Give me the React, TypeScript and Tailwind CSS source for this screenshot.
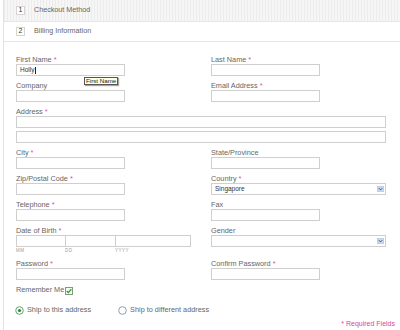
import React from "react";

const font = { fontFamily: '"Liberation Sans", Arial, sans-serif' };

const Req = () => <span className="text-[#d6589c]"> *</span>;

const Label = ({ children, req }: { children: React.ReactNode; req?: boolean }) => (
  <div className="h-[8px] text-[7.3px] leading-[8px] text-[#666] whitespace-nowrap">
    {children}
    {req && <Req />}
  </div>
);

const Box = ({ className = "w-[109px]", children }: { className?: string; children?: React.ReactNode }) => (
  <div className={`h-[12px] border border-[#cfcfcf] bg-white ${className} flex items-center px-[3px] text-[6.5px] text-[#333]`}>
    {children}
  </div>
);

const Arrow = () => (
  <svg width="7" height="6" viewBox="0 0 7 6" className="shrink-0">
    <rect x="0" y="0" width="7" height="6" rx="1" fill="#c9d8ef" stroke="#9fb5d9" strokeWidth="0.5" />
    <path d="M1.8 2.2 L3.5 3.9 L5.2 2.2" fill="none" stroke="#2d4f8a" strokeWidth="1" />
  </svg>
);

const Select = ({ value }: { value?: string }) => (
  <div className="h-[12px] w-[175px] border border-[#cfcfcf] bg-white flex items-center justify-between pl-[3px] pr-[1px] text-[6.5px] text-[#333]">
    <span>{value}</span>
    <Arrow />
  </div>
);

const Field = ({ label, req, children }: { label: string; req?: boolean; children: React.ReactNode }) => (
  <div className="flex flex-col">
    <Label req={req}>{label}</Label>
    {children}
  </div>
);

const Row = ({ children }: { children: React.ReactNode }) => (
  <div className="grid grid-cols-[195px_175px]">{children}</div>
);

const DatePart = ({ w, label, first }: { w: string; label: string; first?: boolean }) => (
  <div className={`flex flex-col ${first ? "" : "-ml-[1px]"}`}>
    <Box className={w} />
    <span className="text-[4.5px] tracking-[0.5px] text-[#999] leading-[7px]">{label}</span>
  </div>
);

export default function App() {
  return (
    <div className="w-[400px] h-[330px] bg-white overflow-hidden" style={font}>
      <div className="ml-[3px] border-l border-[#e2e2e2] h-full">
        <div className="h-[22px] border-b border-[#e6e6e6] bg-[#f6f6f6] bg-[repeating-linear-gradient(90deg,#ececec_0_1px,transparent_1px_3px)] flex items-center pl-[12px] gap-[9px]">
          <div className="w-[9px] h-[9px] bg-white border border-[#d4d4d4] flex items-center justify-center text-[7px] text-[#333]">1</div>
          <span className="text-[7.2px] text-[#666]">Checkout Method</span>
        </div>
        <div className="h-[20px] border-b border-[#e6e6e6] flex items-center pl-[12px] gap-[9px]">
          <div className="w-[9px] h-[9px] bg-white border border-[#d4d4d4] flex items-center justify-center text-[7px] text-[#333]">2</div>
          <span className="text-[7.2px] text-[#666]">Billing Information</span>
        </div>

        <div className="pl-[12px] pt-[14px] flex flex-col gap-[6px]">
          <Row>
            <Field label="First Name" req>
              <div className="relative">
                <Box>
                  Holly<span className="ml-[1px] w-[0.5px] h-[7px] bg-[#222]" />
                </Box>
                <div className="absolute left-[68px] top-[13px] h-[8px] px-[1px] bg-[#ffffe1] border border-[#555] shadow-[1px_1px_1px_rgba(0,0,0,0.35)] text-[6.2px] leading-[6px] text-[#222] whitespace-nowrap">
                  First Name
                </div>
              </div>
            </Field>
            <Field label="Last Name" req>
              <Box />
            </Field>
          </Row>
          <Row>
            <Field label="Company">
              <Box />
            </Field>
            <Field label="Email Address" req>
              <Box />
            </Field>
          </Row>
          <div className="flex flex-col gap-[3px]">
            <Field label="Address" req>
              <Box className="w-[370px]" />
            </Field>
            <Box className="w-[370px]" />
          </div>
          <Row>
            <Field label="City" req>
              <Box />
            </Field>
            <Field label="State/Province">
              <Box />
            </Field>
          </Row>
          <Row>
            <Field label="Zip/Postal Code" req>
              <Box />
            </Field>
            <Field label="Country" req>
              <Select value="Singapore" />
            </Field>
          </Row>
          <Row>
            <Field label="Telephone" req>
              <Box />
            </Field>
            <Field label="Fax">
              <Box />
            </Field>
          </Row>
          <Row>
            <Field label="Date of Birth" req>
              <div className="flex">
                <DatePart w="w-[50px]" label="MM" first />
                <DatePart w="w-[51px]" label="DD" />
                <DatePart w="w-[76px]" label="YYYY" />
              </div>
            </Field>
            <Field label="Gender">
              <Select />
            </Field>
          </Row>
          <Row>
            <Field label="Password" req>
              <Box />
            </Field>
            <Field label="Confirm Password" req>
              <Box />
            </Field>
          </Row>
          <div className="flex items-center h-[9px]">
            <span className="text-[7.3px] text-[#666]">Remember Me</span>
            <svg width="8" height="8" viewBox="0 0 8 8" className="ml-[0.5px]">
              <rect x="0.5" y="0.5" width="7" height="7" fill="#f4fbf2" stroke="#7d9a7a" strokeWidth="1" />
              <path d="M1.8 4 L3.3 5.6 L6.3 2.2" fill="none" stroke="#2f9a2f" strokeWidth="1.3" />
            </svg>
          </div>
          <div className="flex items-center h-[10px] mt-[4px] text-[7.3px] text-[#666]">
            <svg width="9" height="9" viewBox="0 0 9 9" className="ml-[-1px]">
              <circle cx="4.5" cy="4.5" r="3.8" fill="#f4fbf4" stroke="#5b9a68" strokeWidth="0.9" />
              <circle cx="4.5" cy="4.5" r="1.6" fill="#2c8a3a" />
            </svg>
            <span className="ml-[3px]">Ship to this address</span>
            <svg width="9" height="9" viewBox="0 0 9 9" className="ml-[27px]">
              <circle cx="4.5" cy="4.5" r="3.8" fill="#fff" stroke="#7c95b0" strokeWidth="0.9" />
            </svg>
            <span className="ml-[3px]">Ship to different address</span>
          </div>
          <div className="flex justify-end pr-[5px] -mt-[1px] text-[7px] leading-[8px] text-[#d4489a]">* Required Fields</div>
        </div>
      </div>
    </div>
  );
}
